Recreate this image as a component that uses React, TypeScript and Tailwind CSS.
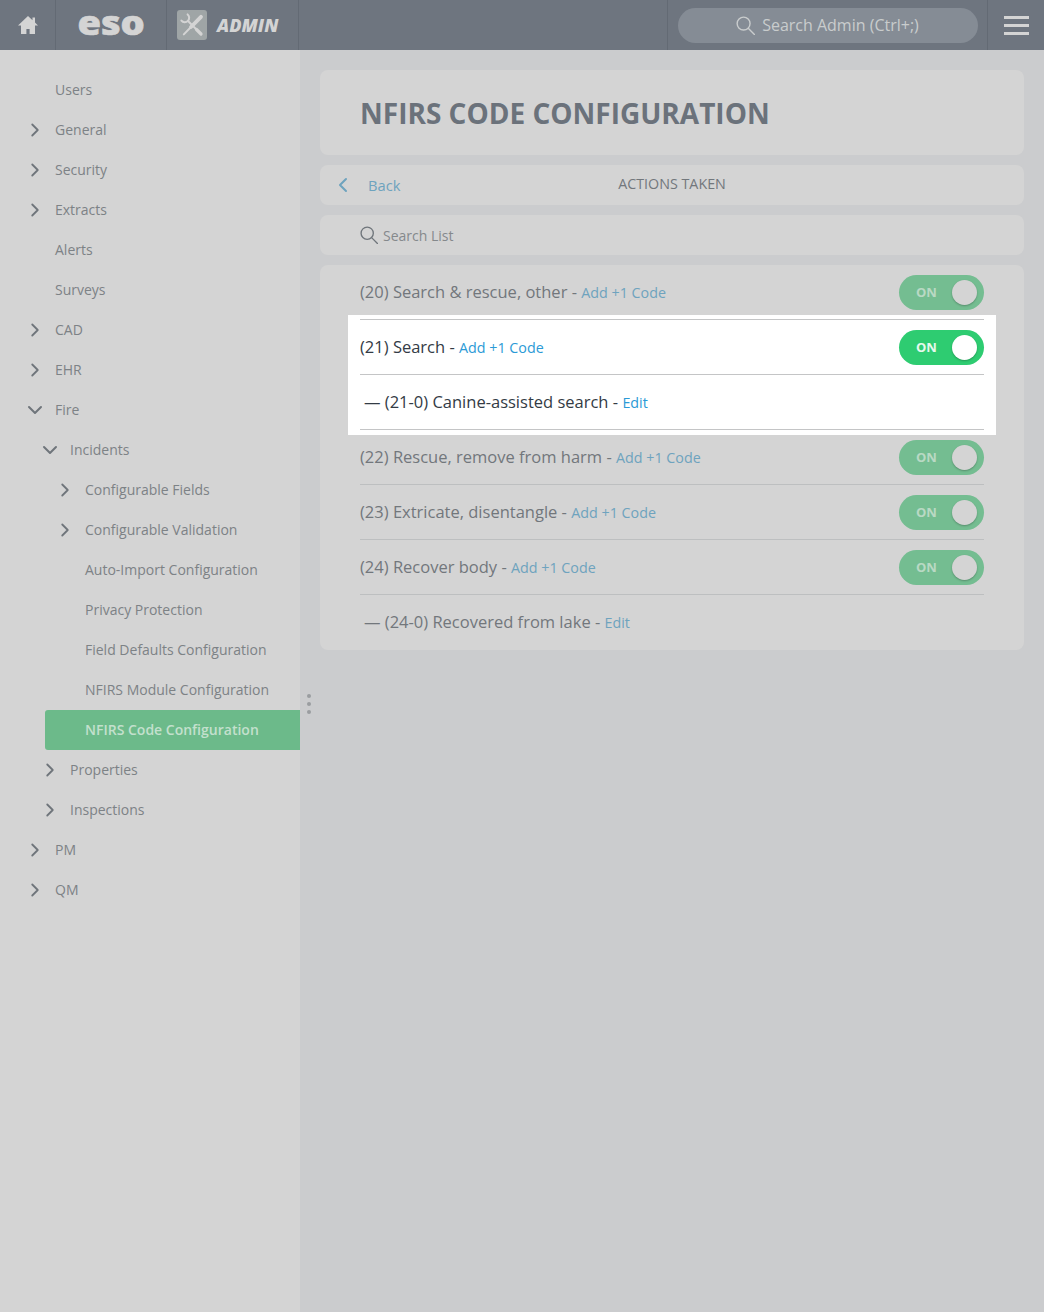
import { ChevronDown, ChevronLeft, ChevronRight } from 'lucide-react'

type NavItem = {
  label: string
  level: 0 | 1 | 2
  caret?: 'right' | 'down'
  active?: boolean
}

const navItems: NavItem[] = [
  { label: 'Users', level: 0 },
  { label: 'General', level: 0, caret: 'right' },
  { label: 'Security', level: 0, caret: 'right' },
  { label: 'Extracts', level: 0, caret: 'right' },
  { label: 'Alerts', level: 0 },
  { label: 'Surveys', level: 0 },
  { label: 'CAD', level: 0, caret: 'right' },
  { label: 'EHR', level: 0, caret: 'right' },
  { label: 'Fire', level: 0, caret: 'down' },
  { label: 'Incidents', level: 1, caret: 'down' },
  { label: 'Configurable Fields', level: 2, caret: 'right' },
  { label: 'Configurable Validation', level: 2, caret: 'right' },
  { label: 'Auto-Import Configuration', level: 2 },
  { label: 'Privacy Protection', level: 2 },
  { label: 'Field Defaults Configuration', level: 2 },
  { label: 'NFIRS Module Configuration', level: 2 },
  { label: 'NFIRS Code Configuration', level: 2, active: true },
  { label: 'Properties', level: 1, caret: 'right' },
  { label: 'Inspections', level: 1, caret: 'right' },
  { label: 'PM', level: 0, caret: 'right' },
  { label: 'QM', level: 0, caret: 'right' },
]

const indent = { 0: 'pl-[20px]', 1: 'pl-[35px]', 2: 'pl-[50px]' }

function SearchGlyph({ size, className }: { size: number; className?: string }) {
  return (
    <svg width={size} height={size} viewBox="0 0 20 20" fill="none" stroke="currentColor" strokeWidth="1.5" className={className}>
      <circle cx="8" cy="8" r="6.8" />
      <path d="M12.9 12.9 L19.4 19.4" strokeLinecap="round" />
    </svg>
  )
}

function SideNav() {
  return (
    <aside className="relative w-[300px] shrink-0 bg-[#d4d4d4] pt-[20px]">
      {navItems.map((item) => (
        <div
          key={item.label}
          className={`flex h-[40px] items-center text-[14px] ${indent[item.level]} ${
            item.active ? 'ml-[45px] rounded-l-[3px] bg-[#6cba8a] !pl-[5px] font-semibold text-[#c3e0cd]' : 'text-[#7d8286]'
          }`}
        >
          <span className="flex w-[30px] justify-center text-[#6f757b]">
            {item.caret === 'right' && <ChevronRight size={22} strokeWidth={2} />}
            {item.caret === 'down' && <ChevronDown size={24} strokeWidth={2} />}
          </span>
          <span className="ml-[5px] whitespace-nowrap pb-[2px]">{item.label}</span>
        </div>
      ))}
      <div className="absolute top-[644px] left-[307px] flex flex-col gap-[4px]">
        <span className="h-[4px] w-[4px] rounded-full bg-[#9a9da0]" />
        <span className="h-[4px] w-[4px] rounded-full bg-[#9a9da0]" />
        <span className="h-[4px] w-[4px] rounded-full bg-[#9a9da0]" />
      </div>
    </aside>
  )
}

function TopBar() {
  return (
    <header className="flex h-[50px] shrink-0 items-stretch bg-[#6e757f]">
      <div className="flex w-[56px] items-center justify-center border-r border-[#636a74]">
        <svg width="20" height="18" viewBox="0 0 20 18" className="text-[#d4d4d4]" fill="currentColor">
          <path d="M10 0 L14.5 4.2 V1.5 H17 V6.6 L20 9.5 H17 V18 H11.6 V13 H8.4 V18 H3 V9.5 H0 Z" />
        </svg>
      </div>
      <div className="flex w-[111px] items-center justify-center border-r border-[#636a74]">
        <span className="scale-x-[1.12] pb-[6px] text-[34px] leading-none font-extrabold text-[#d4d4d4] [-webkit-text-stroke:0.6px_#d4d4d4]">
          eso
        </span>
      </div>
      <div className="flex w-[132px] items-center border-r border-[#636a74] pl-[10px]">
        <span className="flex h-[30px] w-[30px] items-center justify-center rounded-[3px] bg-[#9fa5a6]">
          <svg width="30" height="30" viewBox="0 0 30 30" fill="none" stroke="#d4d4d4" strokeLinecap="round">
            <path d="M10.6 4.4 A4.4 4.4 0 1 1 4.4 10.6" strokeWidth="2" />
            <path d="M11 11 L19 19" strokeWidth="2" />
            <path d="M19.5 19.5 L24 24" strokeWidth="3.2" />
            <path d="M24 6.8 L14 17" strokeWidth="3.8" />
            <path d="M14 17 L6.8 24.4" strokeWidth="2" />
          </svg>
        </span>
        <span className="ml-[10px] text-[18px] font-extrabold italic text-[#d4d4d4]">ADMIN</span>
      </div>
      <div className="flex-1" />
      <div className="flex w-[321px] items-center justify-center border-x border-[#636a74]">
        <div className="flex h-[35px] w-[300px] items-center justify-center gap-[7px] rounded-full bg-[#858c95] text-[16px] text-[#c9cccd]">
          <SearchGlyph size={19} />
          <span>Search Admin (Ctrl+;)</span>
        </div>
      </div>
      <div className="flex w-[56px] flex-col items-center justify-center gap-[5px]">
        <span className="h-[3px] w-[25px] bg-[#d4d4d4]" />
        <span className="h-[3px] w-[25px] bg-[#d4d4d4]" />
        <span className="h-[3px] w-[25px] bg-[#d4d4d4]" />
      </div>
    </header>
  )
}

function Toggle({ dim }: { dim?: boolean }) {
  return (
    <div
      className={`flex h-[35px] w-[85px] items-center justify-between rounded-full pr-[7px] pl-[17px] ${
        dim ? 'bg-[#74bd91]' : 'bg-[#2ecc71]'
      }`}
    >
      <span className={`pt-[1px] text-[13px] font-bold ${dim ? 'text-[#b9d9c4]' : 'text-[#e6f8ed]'}`}>ON</span>
      <span
        className={`h-[25px] w-[25px] rounded-full shadow-[0_1px_2px_rgba(0,0,0,0.25)] ${dim ? 'bg-[#d4d4d4]' : 'bg-white'}`}
      />
    </div>
  )
}

function CodeLabel({ text, link, dim }: { text: string; link: string; dim?: boolean }) {
  return (
    <div className={`whitespace-nowrap text-[16.5px] ${dim ? 'text-[#72777c]' : 'text-[#333b45]'}`}>
      {text} -{' '}
      <span className={`text-[14.3px] font-medium ${dim ? 'text-[#6ea3be]' : 'text-[#2b9ad6]'}`}>{link}</span>
    </div>
  )
}

function CodeList() {
  return (
    <section className="rounded-lg bg-[#d4d4d4] px-[40px]">
      <div className="flex h-[50px] items-center justify-between pt-[5px]">
        <div className="-mt-[1px]">
          <CodeLabel dim text="(20) Search & rescue, other" link="Add +1 Code" />
        </div>
        <Toggle dim />
      </div>

      {/* highlighted code */}
      <div className="-mx-[12px] h-[120px] bg-white px-[12px] pt-[4px]">
        <div className="h-px bg-[#c4c5c6]" />
        <div className="flex h-[55px] items-center justify-between border-b border-[#c4c5c6]">
          <CodeLabel text="(21) Search" link="Add +1 Code" />
          <Toggle />
        </div>
        <div className="flex h-[55px] items-center border-b border-[#c4c5c6] pl-[4px]">
          <CodeLabel text="— (21-0) Canine-assisted search" link="Edit" />
        </div>
      </div>

      <div className="flex h-[50px] items-center justify-between border-b border-[#bdbfc0] pb-[5px]">
        <CodeLabel dim text="(22) Rescue, remove from harm" link="Add +1 Code" />
        <Toggle dim />
      </div>
      <div className="flex h-[55px] items-center justify-between border-b border-[#bdbfc0]">
        <CodeLabel dim text="(23) Extricate, disentangle" link="Add +1 Code" />
        <Toggle dim />
      </div>
      <div className="flex h-[55px] items-center justify-between border-b border-[#bdbfc0]">
        <CodeLabel dim text="(24) Recover body" link="Add +1 Code" />
        <Toggle dim />
      </div>
      <div className="flex h-[55px] items-center pl-[4px]">
        <CodeLabel dim text="— (24-0) Recovered from lake" link="Edit" />
      </div>
    </section>
  )
}

export default function App() {
  return (
    <div className="flex h-[1312px] w-[1044px] flex-col overflow-hidden font-['Open_Sans',sans-serif]">
      <TopBar />
      <div className="flex flex-1">
        <SideNav />
        <main className="flex flex-1 flex-col gap-[10px] bg-[#cbccce] p-[20px]">
          <section className="flex h-[85px] items-center rounded-lg bg-[#d4d4d4] pt-[1px] pl-[40px]">
            <h1 className="text-[28px] font-bold text-[#6b727b]">NFIRS CODE CONFIGURATION</h1>
          </section>

          <section className="relative flex h-[40px] items-center justify-center rounded-lg bg-[#d4d4d4] text-[14.3px] text-[#72777c]">
            <div className="absolute left-[11px] flex h-full items-center text-[#6ea3be]">
              <ChevronLeft size={24} strokeWidth={2} />
              <span className="ml-[13px] text-[14.7px]">Back</span>
            </div>
            <span className="pb-[3px]">ACTIONS TAKEN</span>
          </section>

          <section className="flex h-[40px] items-center gap-[5px] rounded-lg bg-[#d4d4d4] pl-[40px] text-[14px] text-[#85898c]">
            <SearchGlyph size={18} className="text-[#6f757b]" />
            <span>Search List</span>
          </section>

          <CodeList />
        </main>
      </div>
    </div>
  )
}
